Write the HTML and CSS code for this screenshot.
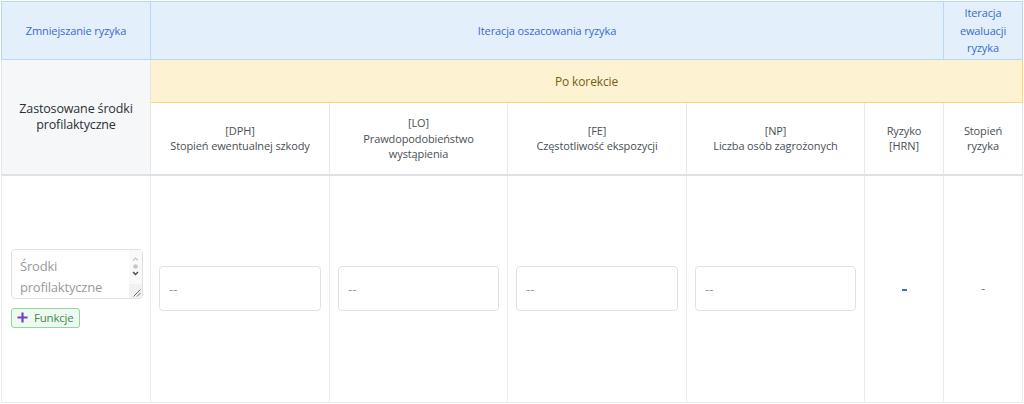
FILE: index.html
```html
<!DOCTYPE html>
<html lang="pl">
<head>
<meta charset="utf-8">
<title>Zmniejszanie ryzyka</title>
<link rel="stylesheet" href="styles.css">
</head>
<body>
<table class="risk">
  <colgroup>
    <col class="c-main">
    <col class="c-in">
    <col class="c-in2">
    <col class="c-in">
    <col class="c-in2">
    <col class="c-sm">
    <col class="c-sm">
  </colgroup>
  <thead>
    <tr class="r-group">
      <th class="grp">Zmniejszanie ryzyka</th>
      <th class="grp" colspan="5">Iteracja oszacowania ryzyka</th>
      <th class="grp">Iteracja ewaluacji ryzyka</th>
    </tr>
    <tr class="r-sub">
      <th class="measures" rowspan="2">Zastosowane środki profilaktyczne</th>
      <th class="after" colspan="6">Po korekcie</th>
    </tr>
    <tr class="r-cols">
      <th class="col">[DPH]<br>Stopień ewentualnej szkody</th>
      <th class="col">[LO]<br>Prawdopodobieństwo wystąpienia</th>
      <th class="col">[FE]<br>Częstotliwość ekspozycji</th>
      <th class="col">[NP]<br>Liczba osób zagrożonych</th>
      <th class="col">Ryzyko<br>[HRN]</th>
      <th class="col">Stopień ryzyka</th>
    </tr>
  </thead>
  <tbody>
    <tr class="r-body">
      <td class="cell-measures">
        <div class="ta-wrap">
          <textarea class="measures-input" placeholder="Środki profilaktyczne"></textarea>
          <svg class="ta-scroll" width="13" height="48" viewBox="0 0 13 48">
            <rect width="13" height="34" fill="#f9f9f9"/>
            <rect y="34" width="13" height="14" fill="#f1f1f1"/>
            <path d="M4 10.5L6.5 8L9 10.5" stroke="#c6c6c6" fill="none" stroke-width="1.2"/>
            <circle cx="6.5" cy="16.5" r="2.3" fill="#c6c6c6"/>
            <path d="M4 22L6.5 24.5L9 22" stroke="#4a4a4a" fill="none" stroke-width="1.4"/>
            <path d="M4.5 46.5L11.5 39.5M8 46.5L11.5 43" stroke="#6e6e6e" stroke-width="1"/>
          </svg>
        </div>
        <button class="btn-func" type="button">
          <svg class="plus" viewBox="0 0 12 12" width="11" height="11"><path d="M6 0.5v11M0.5 6h11" stroke="#6f42c1" stroke-width="2.4"/></svg>
          <span>Funkcje</span>
        </button>
      </td>
      <td class="cell-in"><input class="val-input" placeholder="--"></td>
      <td class="cell-in"><input class="val-input" placeholder="--"></td>
      <td class="cell-in"><input class="val-input" placeholder="--"></td>
      <td class="cell-in"><input class="val-input" placeholder="--"></td>
      <td class="cell-out"><span class="dash-blue"></span></td>
      <td class="cell-out"><span class="dash-gray">-</span></td>
    </tr>
  </tbody>
</table>
</body>
</html>
```

FILE: styles.css
```css
html, body {
  margin: 0;
  padding: 0;
  background: #ffffff;
}

body {
  font-family: "Open Sans", "Noto Sans", sans-serif;
  font-size: 11px;
  color: #495057;
}

.risk {
  margin: 1px 0 0 1px;
  width: 1021px;
  border-collapse: collapse;
  table-layout: fixed;
}

.c-main { width: 149px; }
.c-in { width: 179px; }
.c-in2 { width: 178px; }
.c-sm { width: 79px; }

.risk th,
.risk td {
  padding: 0 8px;
  text-align: center;
  vertical-align: middle;
  font-weight: 400;
  letter-spacing: -0.12px;
}

.r-group { height: 58px; }
.r-group th.grp {
  background: #e3f0fc;
  color: #376bd0;
  border: 1px solid #b9d6f4;
  line-height: 17.5px;
  padding: 0 4px;
}

.r-sub { height: 43px; }
.r-sub th.measures {
  background: #f6f7f9;
  color: #2a3035;
  font-size: 12.5px;
  font-weight: 500;
  line-height: 16px;
  letter-spacing: -0.15px;
  border: 1px solid #e4e7ea;
  border-top: 1px solid #b9d6f4;
  border-bottom: 2px solid #dee2e6;
  padding: 0 10px;
}
.r-sub th.after {
  background: #fdf3d2;
  color: #7a5d14;
  font-size: 12px;
  border: 1px solid #fcd774;
  border-top: 1px solid #b9d6f4;
}

.r-cols { height: 72px; }
.r-cols th.col {
  background: #ffffff;
  color: #4a5056;
  line-height: 15.5px;
  border-left: 1px solid #e7e9ec;
  border-right: 1px solid #e7e9ec;
  border-bottom: 2px solid #dee2e6;
  padding: 0 6px;
}

.r-body { height: 228px; }
.r-body td {
  border: 1px solid #e9ecef;
  padding: 0 8px;
}
.r-body td.cell-measures {
  text-align: left;
  padding: 0 8px 1px 9px;
}

.ta-wrap {
  position: relative;
  width: 132px;
  height: 50px;
}

.measures-input {
  display: block;
  box-sizing: border-box;
  width: 132px;
  height: 50px;
  margin: 0;
  padding: 6px 16px 2px 8px;
  border: 1px solid #dee2e6;
  border-radius: 4px;
  font-family: "Open Sans", "Noto Sans", sans-serif;
  font-size: 13px;
  letter-spacing: -0.2px;
  line-height: 21.5px;
  color: #495057;
  resize: none;
  overflow: hidden;
}
.measures-input::placeholder {
  color: #969ba1;
}

.ta-scroll {
  position: absolute;
  top: 1px;
  right: 1px;
  border-bottom-right-radius: 3px;
}

.btn-func {
  display: flex;
  align-items: center;
  gap: 6px;
  margin-top: 9px;
  height: 20px;
  padding: 0 5px 0 5px;
  border: 1px solid #92d6a0;
  border-radius: 3px;
  background: #eefaf1;
  color: #3e8a50;
  font-family: "Open Sans", "Noto Sans", sans-serif;
  font-size: 11.5px;
  letter-spacing: -0.2px;
  line-height: 1;
}
.plus { flex: none; }

.val-input {
  display: block;
  box-sizing: border-box;
  width: 100%;
  height: 45px;
  margin: 0;
  padding: 0 9px;
  border: 1px solid #dee2e6;
  border-radius: 4px;
  font-family: "Open Sans", "Noto Sans", sans-serif;
  font-size: 13px;
  color: #495057;
  background: #fff;
}
.val-input::placeholder {
  color: #969ba1;
}

.dash-blue {
  display: inline-block;
  width: 5px;
  height: 2px;
  background: #3d70d2;
  vertical-align: middle;
}
.dash-gray {
  color: #6c757d;
  font-size: 12px;
}
```
